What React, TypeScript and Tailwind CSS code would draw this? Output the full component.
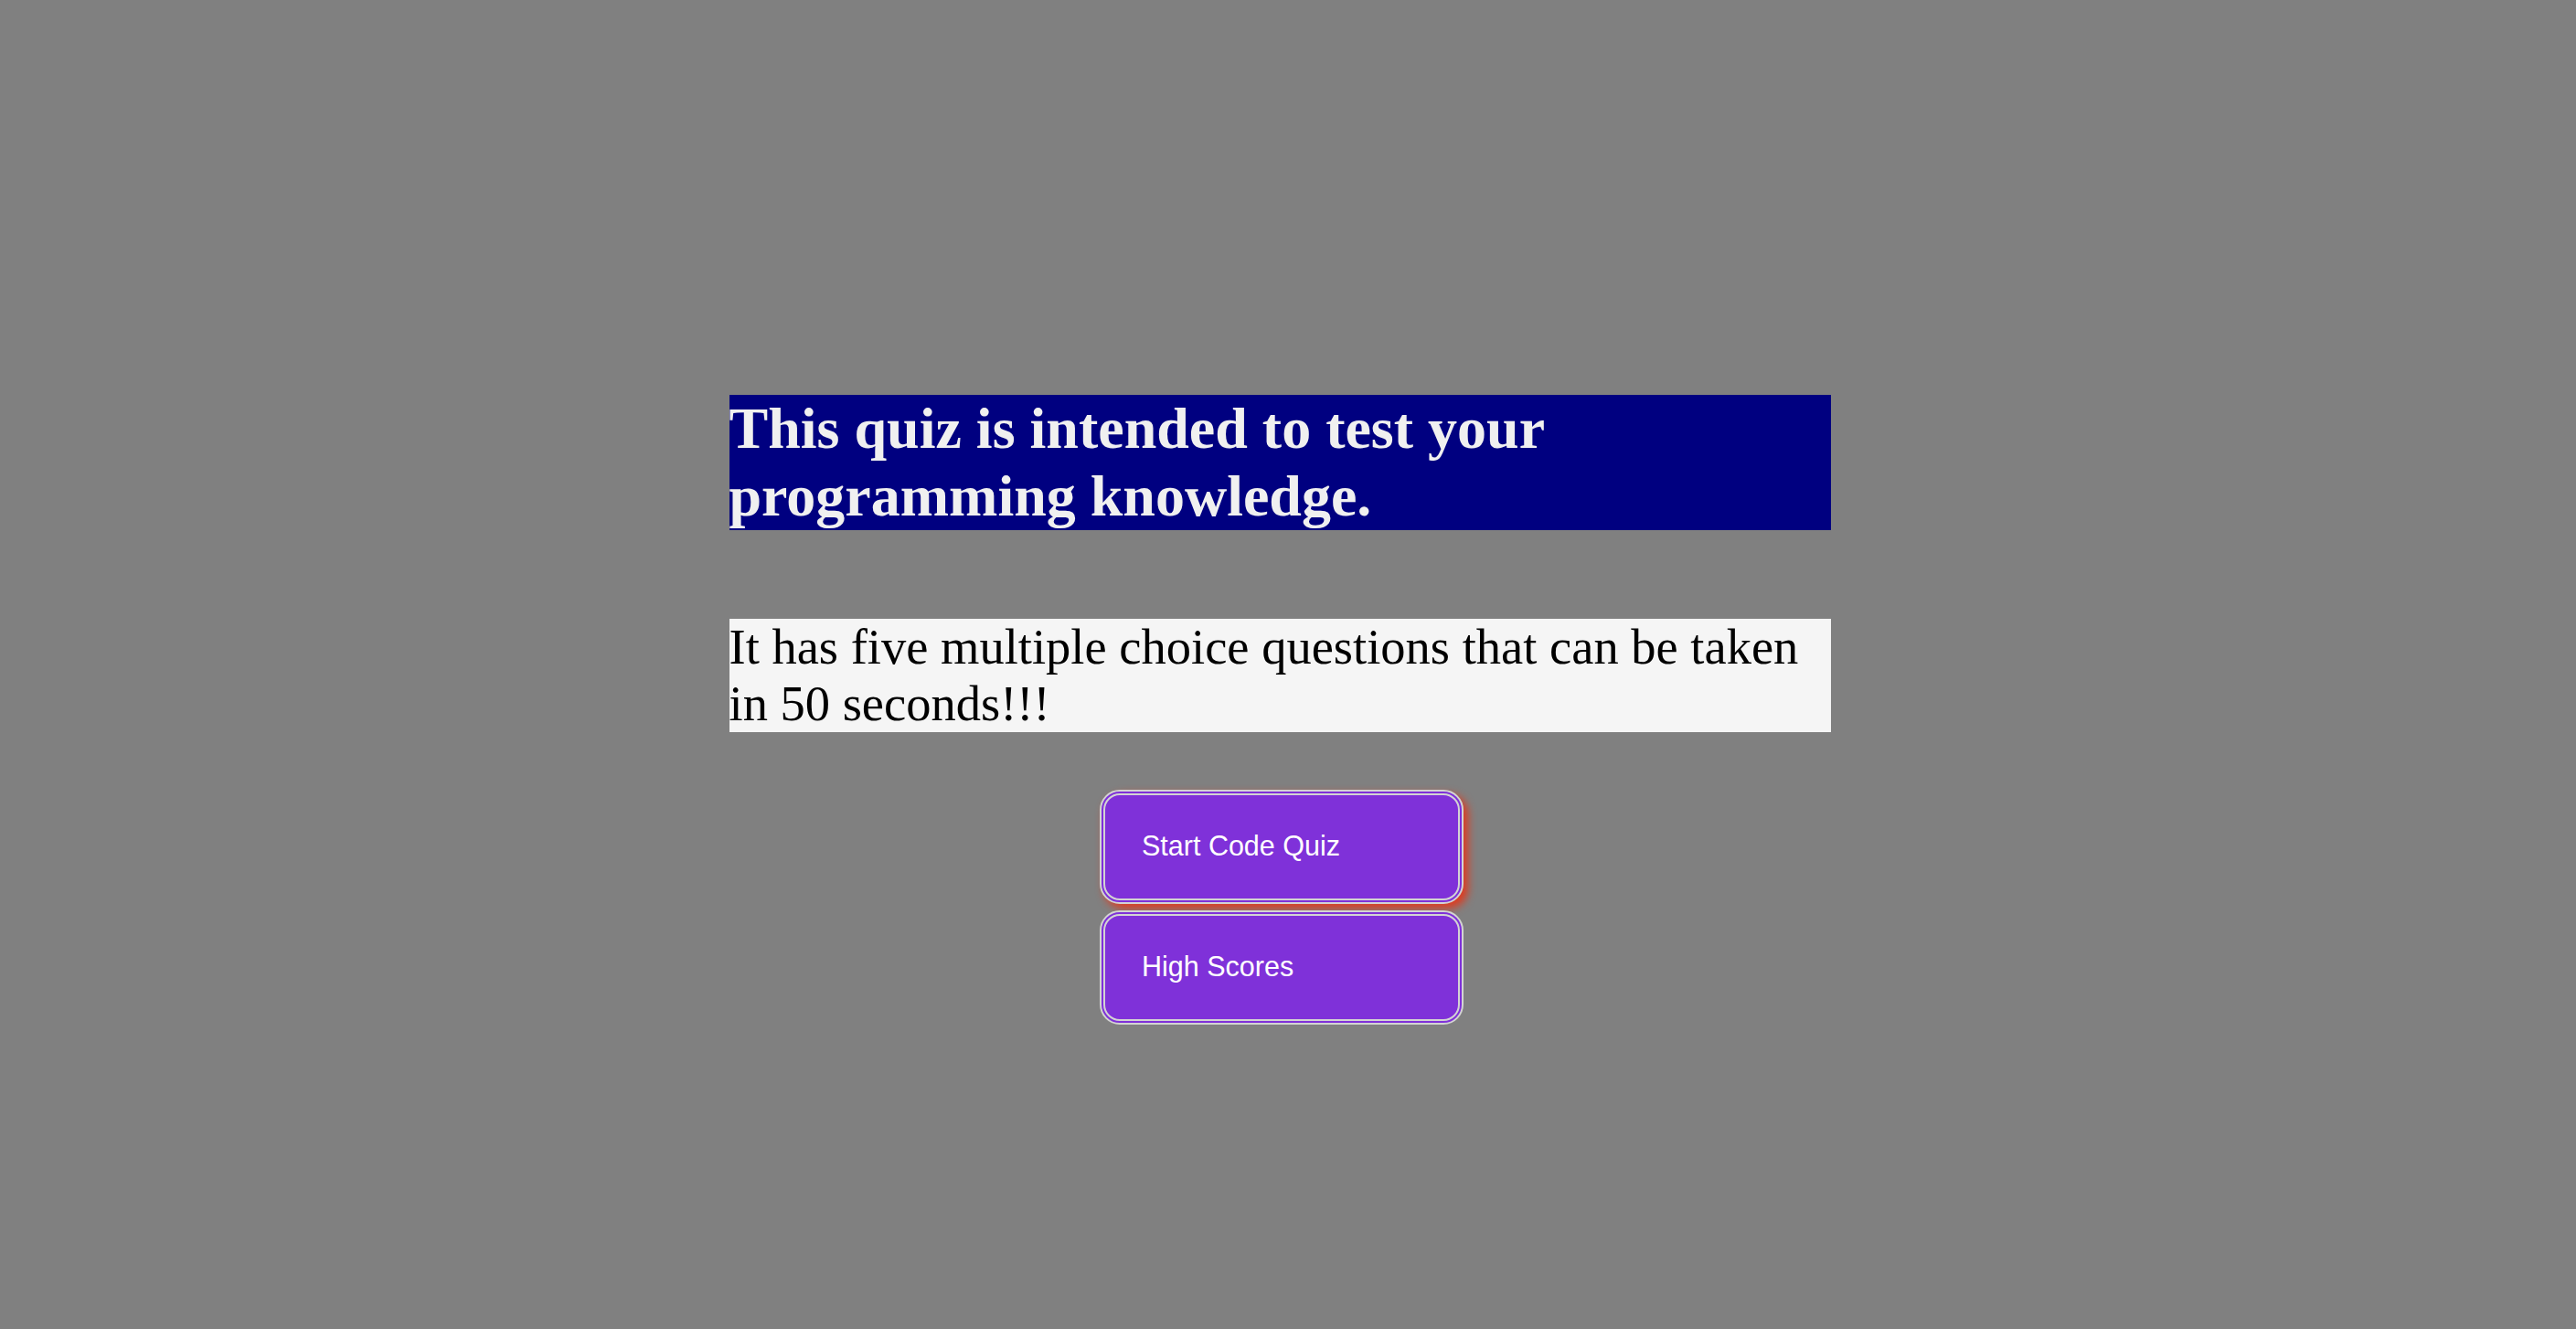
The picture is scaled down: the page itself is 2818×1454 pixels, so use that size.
import React from 'react';

const App: React.FC = () => {
  return (
    <div className="min-h-[1454px] w-full bg-[#808080] pt-[432px] pr-[18px] flex flex-col items-center">
      <div className="w-[1205px] flex flex-col">
        <h1 className="bg-[#000080] text-[#f0f0f0] font-bold text-[64px] leading-[74px] font-['Liberation_Serif',serif]">
          This quiz is intended to test your programming knowledge.
        </h1>
        <p className="mt-[97px] bg-[#f5f5f5] text-black text-[54.5px] leading-[62px] font-['Liberation_Serif',serif]">
          It has five multiple choice questions that can be taken in 50 seconds!!!
        </p>
      </div>

      {/* Buttons */}
      <div className="mt-[63px] ml-[4px] flex flex-col gap-[7px]">
        <button className="w-[398px] h-[125px] px-[40px] pb-[2px] text-left bg-[#7f31d9] text-white text-[30.5px] font-['Liberation_Sans',Arial,sans-serif] border-[6px] border-double border-[#d3d3d3] rounded-[22px] shadow-[5px_5px_10px_#e03a1e]">
          Start Code Quiz
        </button>
        <button className="w-[398px] h-[125px] px-[40px] pb-[2px] text-left bg-[#7f31d9] text-white text-[30.5px] font-['Liberation_Sans',Arial,sans-serif] border-[6px] border-double border-[#d3d3d3] rounded-[22px]">
          High Scores
        </button>
      </div>
    </div>
  );
};

export default App;
